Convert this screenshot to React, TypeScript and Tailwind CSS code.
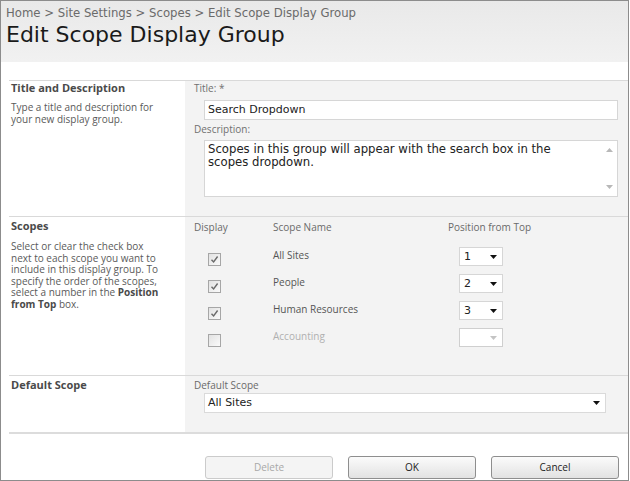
import React from "react";

const seg = { fontFamily: '"Open Sans", "Noto Sans", sans-serif' };
const ver = { fontFamily: '"DejaVu Sans", Verdana, sans-serif' };

function Arrow({ color = "#111" }: { color?: string }) {
  return (
    <svg width="7" height="4" viewBox="0 0 7 4" className="block">
      <polygon points="0,0 7,0 3.5,4" fill={color} />
    </svg>
  );
}

function Check({ checked }: { checked: boolean }) {
  return (
    <div className="w-[13px] h-[13px] border border-[#a6a6a6] bg-gradient-to-br from-[#e2e2e2] to-[#fafafa] flex items-center justify-center">
      {checked && (
        <svg width="9" height="9" viewBox="0 0 9 9">
          <path d="M1.5 4.8 L3.6 7 L7.6 1.5" stroke="#6a6a6a" strokeWidth="1.4" fill="none" />
        </svg>
      )}
    </div>
  );
}

function PosSelect({ value }: { value?: string }) {
  const disabled = !value;
  return (
    <div
      className={`w-[44px] h-[19px] bg-white border ${disabled ? "border-[#cfcfcf]" : "border-[#d6d6d6]"} flex items-center justify-between pl-[4px] pr-[5px]`}
    >
      <span className="text-[11px] text-[#222] leading-none" style={ver}>
        {value ?? ""}
      </span>
      <Arrow color={disabled ? "#c4c4c4" : "#111"} />
    </div>
  );
}

const rows = [
  { name: "All Sites", checked: true, pos: "1" },
  { name: "People", checked: true, pos: "2" },
  { name: "Human Resources", checked: true, pos: "3" },
  { name: "Accounting", checked: false, pos: undefined },
];

export default function App() {
  return (
    <div className="w-[630px] h-[481px] overflow-hidden bg-white">
      <div className="w-[629px] h-[481px] border border-[#8c8c8c] flex flex-col">
        {/* Header */}
        <div className="h-[61px] bg-gradient-to-b from-[#e9e9e9] to-[#f1f1f1] pl-[5px] pt-[5px]">
          <div className="text-[11.7px] leading-[15px] text-[#6a6a6a]" style={ver}>
            Home &gt; Site Settings &gt; Scopes &gt; Edit Scope Display Group
          </div>
          <div className="text-[22px] leading-[28px] text-[#1a1a1a]" style={ver}>
            Edit Scope Display Group
          </div>
        </div>

        <div className="h-[18px]" />

        {/* Content */}
        <div className="ml-[8px] border-t border-[#d9d9d9]">
          {/* Section 1 */}
          <div className="flex h-[136px] border-b border-[#d9d9d9]">
            <div className="w-[176px] pl-[2px] pt-[0px]" style={seg}>
              <div className="text-[11px] font-bold text-[#4a4a4a] leading-[14px]">Title and Description</div>
              <div className="text-[10px] text-[#5a5a5a] leading-[11.5px] mt-[7px] pr-[12px]">
                Type a title and description for
                <br />
                your new display group.
              </div>
            </div>
            <div className="flex-1 bg-[#f3f3f3] pl-[9px] pt-[0px]">
              <div className="text-[10px] text-[#707070] leading-[14px]" style={seg}>
                Title: *
              </div>
              <div
                className="ml-[10px] mt-[5px] w-[414px] h-[20px] bg-white border border-[#d6d6d6] flex items-center pl-[3px] text-[11px] text-[#222]"
                style={ver}
              >
                Search Dropdown
              </div>
              <div className="text-[10px] text-[#707070] leading-[14px] mt-[2px]" style={seg}>
                Description:
              </div>
              <div className="ml-[10px] mt-[4px] w-[414px] h-[57px] bg-white border border-[#d6d6d6] flex">
                <div className="flex-1 pl-[3px] pt-[2px] text-[11.7px] leading-[13px] text-[#222]" style={ver}>
                  Scopes in this group will appear with the search box in the
                  <br />
                  scopes dropdown.
                </div>
                <div className="w-[15px] flex flex-col items-center justify-between py-[7px]">
                  <svg width="7" height="4" viewBox="0 0 7 4">
                    <polygon points="0,4 7,4 3.5,0" fill="#b8b8b8" />
                  </svg>
                  <svg width="7" height="4" viewBox="0 0 7 4">
                    <polygon points="0,0 7,0 3.5,4" fill="#b8b8b8" />
                  </svg>
                </div>
              </div>
            </div>
          </div>

          {/* Section 2 */}
          <div className="flex h-[159px] border-b border-[#d9d9d9]">
            <div className="w-[176px] pl-[2px] pt-[2px]" style={seg}>
              <div className="text-[11px] font-bold text-[#4a4a4a] leading-[14px]">Scopes</div>
              <div className="text-[10px] text-[#5a5a5a] leading-[11.5px] mt-[8px]">
                Select or clear the check box
                <br />
                next to each scope you want to
                <br />
                include in this display group. To
                <br />
                specify the order of the scopes,
                <br />
                select a number in the <b className="text-[#4a4a4a]">Position</b>
                <br />
                <b className="text-[#4a4a4a]">from Top</b> box.
              </div>
            </div>
            <div className="flex-1 bg-[#f3f3f3] pl-[9px] pt-[3px]" style={seg}>
              <div className="flex text-[10px] text-[#6a6a6a] leading-[14px]">
                <div className="w-[79px]">Display</div>
                <div className="w-[175px]">Scope Name</div>
                <div>Position from Top</div>
              </div>
              <div className="mt-[13px] flex flex-col">
                {rows.map((r) => (
                  <div key={r.name} className="flex h-[27px]">
                    <div className="w-[79px] pl-[14px] pt-[6px]">
                      <Check checked={r.checked} />
                    </div>
                    <div
                      className={`w-[175px] pt-[1px] text-[10px] leading-[14px] ${r.checked ? "text-[#555]" : "text-[#b0b0b0]"}`}
                    >
                      {r.name}
                    </div>
                    <div className="pl-[11px]">
                      <PosSelect value={r.pos} />
                    </div>
                  </div>
                ))}
              </div>
            </div>
          </div>

          {/* Section 3 */}
          <div className="flex h-[58px] border-b-2 border-[#dcdcdc]">
            <div className="w-[176px] pl-[2px] pt-[2px]" style={seg}>
              <div className="text-[11px] font-bold text-[#4a4a4a] leading-[14px]">Default Scope</div>
            </div>
            <div className="flex-1 bg-[#f3f3f3] pl-[9px] pt-[2px]">
              <div className="text-[10px] text-[#6a6a6a] leading-[14px]" style={seg}>
                Default Scope
              </div>
              <div className="ml-[10px] mt-[1px] w-[402px] h-[20px] bg-white border border-[#dadada] flex items-center justify-between pl-[3px] pr-[5px]">
                <span className="text-[11px] text-[#222]" style={ver}>
                  All Sites
                </span>
                <Arrow />
              </div>
            </div>
          </div>
        </div>

        {/* Buttons */}
        <div className="flex pl-[204px] pt-[22px] gap-[15px]" style={seg}>
          <button className="w-[128px] h-[23px] rounded-[3px] border border-[#cbcbcb] bg-[#f4f4f4] text-[10px] text-[#a8a8a8]">
            Delete
          </button>
          <button className="w-[128px] h-[23px] rounded-[3px] border border-[#8e8e8e] bg-gradient-to-b from-[#fbfbfb] to-[#e2e2e2] text-[10px] text-[#222]">
            OK
          </button>
          <button className="w-[128px] h-[23px] rounded-[3px] border border-[#8e8e8e] bg-gradient-to-b from-[#fbfbfb] to-[#e2e2e2] text-[10px] text-[#222]">
            Cancel
          </button>
        </div>
      </div>
    </div>
  );
}
